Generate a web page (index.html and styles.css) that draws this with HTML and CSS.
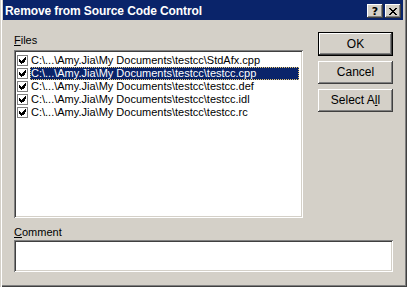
FILE: index.html
```html
<!DOCTYPE html>
<html>
<head>
<meta charset="utf-8">
<link rel="stylesheet" href="styles.css">
</head>
<body>
<div class="window">
  <div class="titlebar">
    <span class="title">Remove from Source Code Control</span>
    <div class="caption-btns">
      <div class="cbtn help">?</div>
      <div class="cbtn close">
        <svg width="8" height="7" viewBox="0 0 8 7" shape-rendering="crispEdges"><path d="M0 0h2v1h-2zM6 0h2v1h-2zM1 1h2v1h-2zM5 1h2v1h-2zM2 2h4v1h-4zM3 3h2v1h-2zM2 4h4v1h-4zM1 5h2v1h-2zM5 5h2v1h-2zM0 6h2v1h-2zM6 6h2v1h-2z" fill="#000"/></svg>
      </div>
    </div>
  </div>
  <div class="client">
    <div class="main">
      <div class="left">
        <div class="label"><u>F</u>iles</div>
        <div class="listbox">
          <div class="row"><span class="chk"><svg width="7" height="7" viewBox="0 0 7 7" shape-rendering="crispEdges"><path d="M6 0h1v3h-1zM5 1h1v4h-1zM4 2h1v4h-1zM3 3h1v3h-1zM2 4h1v3h-1zM1 3h1v3h-1zM0 2h1v3h-1z" fill="#000"/></svg></span><span class="txt">C:\...\Amy.Jia\My Documents\testcc\StdAfx.cpp</span></div>
          <div class="row sel"><span class="chk"><svg width="7" height="7" viewBox="0 0 7 7" shape-rendering="crispEdges"><path d="M6 0h1v3h-1zM5 1h1v4h-1zM4 2h1v4h-1zM3 3h1v3h-1zM2 4h1v3h-1zM1 3h1v3h-1zM0 2h1v3h-1z" fill="#000"/></svg></span><span class="txt">C:\...\Amy.Jia\My Documents\testcc\testcc.cpp</span></div>
          <div class="row"><span class="chk"><svg width="7" height="7" viewBox="0 0 7 7" shape-rendering="crispEdges"><path d="M6 0h1v3h-1zM5 1h1v4h-1zM4 2h1v4h-1zM3 3h1v3h-1zM2 4h1v3h-1zM1 3h1v3h-1zM0 2h1v3h-1z" fill="#000"/></svg></span><span class="txt">C:\...\Amy.Jia\My Documents\testcc\testcc.def</span></div>
          <div class="row"><span class="chk"><svg width="7" height="7" viewBox="0 0 7 7" shape-rendering="crispEdges"><path d="M6 0h1v3h-1zM5 1h1v4h-1zM4 2h1v4h-1zM3 3h1v3h-1zM2 4h1v3h-1zM1 3h1v3h-1zM0 2h1v3h-1z" fill="#000"/></svg></span><span class="txt">C:\...\Amy.Jia\My Documents\testcc\testcc.idl</span></div>
          <div class="row"><span class="chk"><svg width="7" height="7" viewBox="0 0 7 7" shape-rendering="crispEdges"><path d="M6 0h1v3h-1zM5 1h1v4h-1zM4 2h1v4h-1zM3 3h1v3h-1zM2 4h1v3h-1zM1 3h1v3h-1zM0 2h1v3h-1z" fill="#000"/></svg></span><span class="txt">C:\...\Amy.Jia\My Documents\testcc\testcc.rc</span></div>
        </div>
      </div>
      <div class="buttons">
        <div class="btn default"><span class="face">OK</span></div>
        <div class="btn"><span class="face">Cancel</span></div>
        <div class="btn"><span class="face">Select A<u>l</u>l</span></div>
      </div>
    </div>
    <div class="label comment-label"><u>C</u>omment</div>
    <div class="field"></div>
  </div>
</div>
</body>
</html>
```
FILE: styles.css
```css
html, body {
  margin: 0;
  padding: 0;
  background: #d4d0c8;
}
.window {
  width: 407px;
  height: 287px;
  box-sizing: border-box;
  padding: 0 4px 3px 3px;
  background: #d4d0c8;
  box-shadow: inset 1px 0 #d4d0c8, inset 2px 0 #fff, inset -1px -1px #404040, inset -2px -2px #808080;
  font-family: "Liberation Sans", Arial, sans-serif;
  font-size: 11px;
  color: #000;
  display: flex;
  flex-direction: column;
}
.titlebar {
  height: 20px;
  background: #0a246a;
  display: flex;
  align-items: center;
  justify-content: space-between;
  padding: 0 2px 0 2px;
}
.title {
  color: #fff;
  font-weight: bold;
  font-size: 12px;
  font-family: "Liberation Sans", Arial, sans-serif;
  letter-spacing: -0.1px;
  padding-top: 1px;
}
.caption-btns {
  display: flex;
  gap: 2px;
  padding-top: 2px;
}
.cbtn {
  width: 16px;
  height: 14px;
  box-sizing: border-box;
  background: #d4d0c8;
  box-shadow: inset -1px -1px #404040, inset 1px 1px #fff, inset -2px -2px #808080;
  display: flex;
  align-items: center;
  justify-content: center;
  font-weight: bold;
  font-size: 11px;
  font-family: "DejaVu Sans", sans-serif;
  line-height: 1;
}
.close svg { display: block; margin-left: -1px; }
.client {
  flex: 1;
  padding: 12px 10px 0 11px;
  display: flex;
  flex-direction: column;
}
.main {
  display: flex;
  gap: 15px;
}
.left {
  width: 289px;
  display: flex;
  flex-direction: column;
}
.label {
  height: 18px;
  line-height: 13px;
  padding-top: 2px;
  box-sizing: border-box;
}
.listbox {
  height: 168px;
  background: #fff;
  box-sizing: border-box;
  padding: 4px 4px 2px 3px;
  box-shadow: inset 1px 1px #808080, inset -1px -1px #fff, inset 2px 2px #404040, inset -2px -2px #d4d0c8;
}
.row {
  height: 13px;
  display: flex;
  align-items: center;
  white-space: nowrap;
}
.chk {
  width: 11px;
  height: 11px;
  box-sizing: border-box;
  border: 1px solid #808080;
  background: #fff;
  display: flex;
  align-items: center;
  justify-content: center;
  margin: 0 2px 0 0;
  flex: none;
}
.chk svg { display: block; }
.txt {
  flex: 1;
  height: 13px;
  line-height: 13px;
  padding-left: 1px;
  box-sizing: border-box;
}
.sel .txt {
  background: #0a246a;
  color: #fff;
  outline: 1px dotted #e8c870;
  outline-offset: -1px;
}
.buttons {
  width: 75px;
  display: flex;
  flex-direction: column;
  gap: 5px;
}
.btn {
  height: 23px;
  box-sizing: border-box;
  background: #d4d0c8;
  box-shadow: inset -1px -1px #404040, inset 1px 1px #fff, inset -2px -2px #808080;
  display: flex;
  align-items: center;
  justify-content: center;
  font-size: 12px;
}
.btn.default {
  height: 24px;
  border: 1px solid #000;
  box-shadow: inset -1px -1px #404040, inset 1px 1px #fff, inset -2px -2px #808080;
}
.face { line-height: 13px; }
.comment-label {
  margin-top: 7px;
  height: 15px;
  padding-top: 1px;
}
.field {
  height: 32px;
  background: #fff;
  box-shadow: inset 1px 1px #808080, inset -1px -1px #fff, inset 2px 2px #404040, inset -2px -2px #d4d0c8;
}
```
